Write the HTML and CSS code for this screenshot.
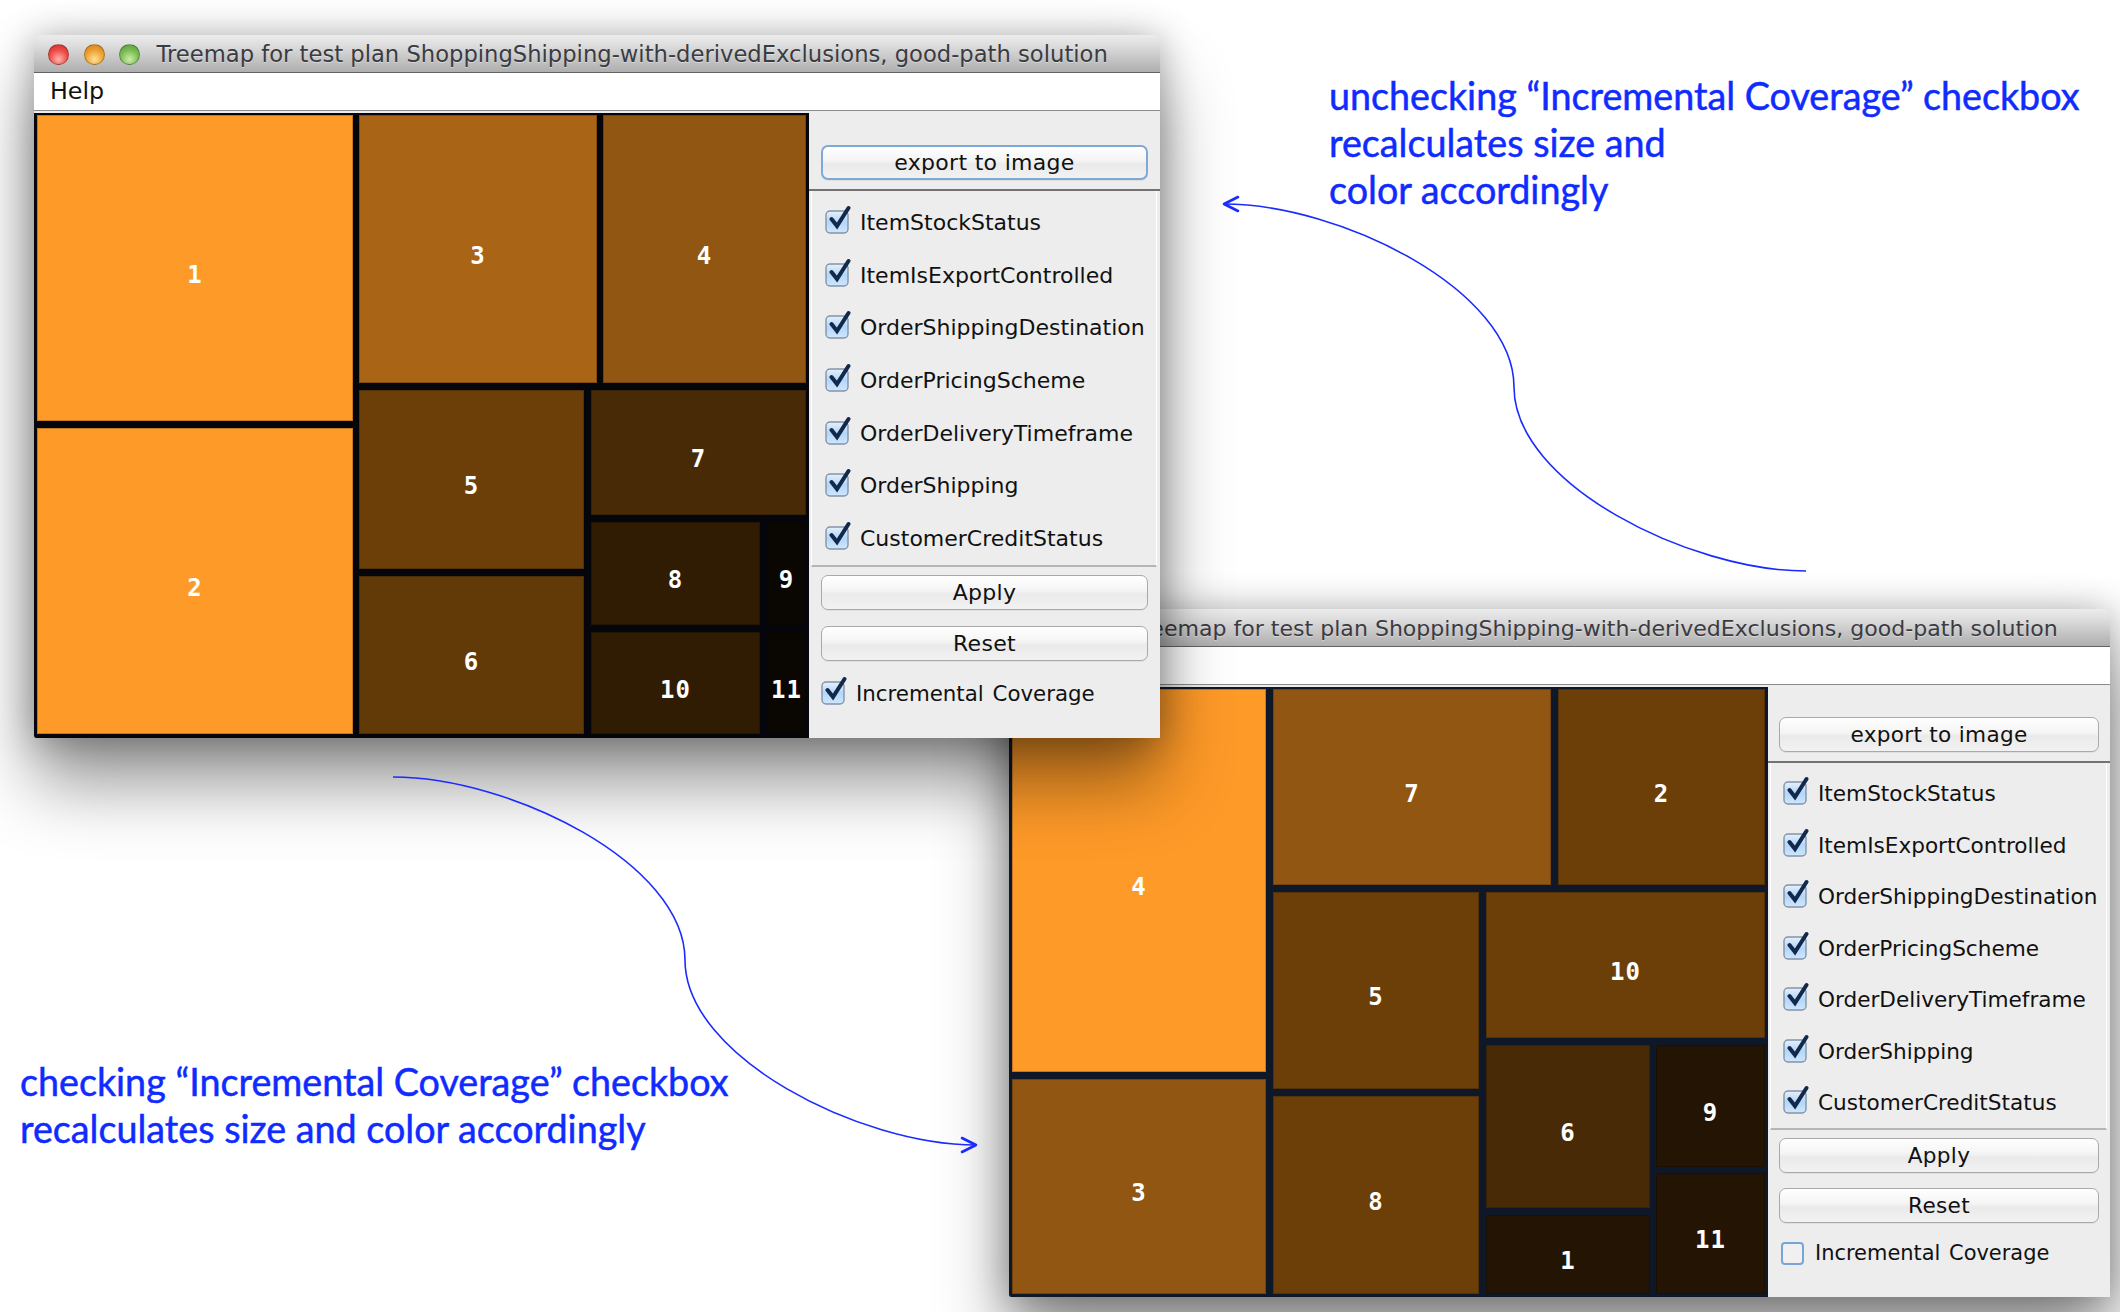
FILE: index.html
```html
<!DOCTYPE html>
<html lang="en">
<head>
<meta charset="UTF-8" />
<title>Treemap incremental coverage</title>
<link rel="stylesheet" href="styles.css">
</head>
<body>

<svg width="0" height="0" class="defs">
  <defs>
    <linearGradient id="boxFill" x1="0" y1="0" x2="0" y2="1">
      <stop offset="0" stop-color="#e6f0fb"/>
      <stop offset="0.5" stop-color="#b4d6f8"/>
      <stop offset="1" stop-color="#cfe6fd"/>
    </linearGradient>
    <symbol id="checked" viewBox="0 0 26 29">
      <rect x="1" y="6" width="22" height="22" rx="4" fill="url(#boxFill)" stroke="#8494a8" stroke-width="1.4"/>
      <path d="M6.5 14 L12 21 L23.5 3" fill="none" stroke="#10294c" stroke-width="4" stroke-linecap="round" stroke-linejoin="miter"/>
    </symbol>
  </defs>
</svg>

<div class="stage">

  <!-- back window: incremental coverage off -->
  <section class="window win-b">
    <div class="titlebar">
      <span class="light red"></span><span class="light amber"></span><span class="light green"></span>
      <span class="title">Treemap for test plan ShoppingShipping-with-derivedExclusions, good-path solution</span>
    </div>
    <div class="menubar"></div>
    <div class="content">
      <div class="treemap">
        <div class="tm-row grow">
          <div class="tm-col" style="flex-basis:254px">
            <div class="cell c-hot" style="flex-basis:383px">4</div>
            <div class="cell c-b1 grow">3</div>
          </div>
          <div class="tm-col grow">
            <div class="tm-row" style="flex-basis:196px">
              <div class="cell c-b1" style="flex-basis:278px">7</div>
              <div class="cell c-b2 grow">2</div>
            </div>
            <div class="tm-row grow">
              <div class="tm-col" style="flex-basis:206px">
                <div class="cell c-b2" style="flex-basis:197px">5</div>
                <div class="cell c-b2 grow">8</div>
              </div>
              <div class="tm-col grow">
                <div class="cell c-b2" style="flex-basis:146px">10</div>
                <div class="tm-row tight grow">
                  <div class="tm-col" style="flex-basis:164px">
                    <div class="cell c-b3" style="flex-basis:163px">6</div>
                    <div class="cell c-b4 grow">1</div>
                  </div>
                  <div class="tm-col tight grow">
                    <div class="cell c-b4" style="flex-basis:122px">9</div>
                    <div class="cell c-b4 grow">11</div>
                  </div>
                </div>
              </div>
            </div>
          </div>
        </div>
      </div>
      <aside class="panel">
        <div class="export-area"><button class="btn">export to image</button></div>
        <ul class="factor-list">
          <li class="check"><svg class="box"><use href="#checked"/></svg>ItemStockStatus</li>
          <li class="check"><svg class="box"><use href="#checked"/></svg>ItemIsExportControlled</li>
          <li class="check"><svg class="box"><use href="#checked"/></svg>OrderShippingDestination</li>
          <li class="check"><svg class="box"><use href="#checked"/></svg>OrderPricingScheme</li>
          <li class="check"><svg class="box"><use href="#checked"/></svg>OrderDeliveryTimeframe</li>
          <li class="check"><svg class="box"><use href="#checked"/></svg>OrderShipping</li>
          <li class="check"><svg class="box"><use href="#checked"/></svg>CustomerCreditStatus</li>
        </ul>
        <div class="actions">
          <button class="btn">Apply</button>
          <button class="btn">Reset</button>
          <div class="check incremental"><span class="box-off"></span>Incremental Coverage</div>
        </div>
      </aside>
    </div>
  </section>

  <!-- front window: incremental coverage on -->
  <section class="window win-a">
    <div class="titlebar">
      <span class="light red"></span><span class="light amber"></span><span class="light green"></span>
      <span class="title">Treemap for test plan ShoppingShipping-with-derivedExclusions, good-path solution</span>
    </div>
    <div class="menubar"><span class="menu-item">Help</span></div>
    <div class="content">
      <div class="treemap">
        <div class="tm-row grow">
          <div class="tm-col" style="flex-basis:316px">
            <div class="cell c-hot" style="flex-basis:306px">1</div>
            <div class="cell c-hot grow">2</div>
          </div>
          <div class="tm-col" style="flex-basis:447px">
            <div class="tm-row tight" style="flex-basis:268px">
              <div class="cell c-a1" style="flex-basis:238px">3</div>
              <div class="cell c-b1 grow">4</div>
            </div>
            <div class="tm-row grow">
              <div class="tm-col" style="flex-basis:225px">
                <div class="cell c-b2" style="flex-basis:179px">5</div>
                <div class="cell c-a2 grow">6</div>
              </div>
              <div class="tm-col grow">
                <div class="cell c-b3" style="flex-basis:125px">7</div>
                <div class="tm-row" style="flex-basis:103px">
                  <div class="cell c-a3" style="flex-basis:169px">8</div>
                  <div class="cell c-a4 grow">9</div>
                </div>
                <div class="tm-row grow">
                  <div class="cell c-a3" style="flex-basis:169px">10</div>
                  <div class="cell c-a4 grow">11</div>
                </div>
              </div>
            </div>
          </div>
        </div>
      </div>
      <aside class="panel">
        <div class="export-area"><button class="btn focused">export to image</button></div>
        <ul class="factor-list">
          <li class="check"><svg class="box"><use href="#checked"/></svg>ItemStockStatus</li>
          <li class="check"><svg class="box"><use href="#checked"/></svg>ItemIsExportControlled</li>
          <li class="check"><svg class="box"><use href="#checked"/></svg>OrderShippingDestination</li>
          <li class="check"><svg class="box"><use href="#checked"/></svg>OrderPricingScheme</li>
          <li class="check"><svg class="box"><use href="#checked"/></svg>OrderDeliveryTimeframe</li>
          <li class="check"><svg class="box"><use href="#checked"/></svg>OrderShipping</li>
          <li class="check"><svg class="box"><use href="#checked"/></svg>CustomerCreditStatus</li>
        </ul>
        <div class="actions">
          <button class="btn">Apply</button>
          <button class="btn">Reset</button>
          <div class="check incremental"><svg class="box"><use href="#checked"/></svg>Incremental Coverage</div>
        </div>
      </aside>
    </div>
  </section>

  <!-- callout arrows -->
  <svg class="arrows" width="2120" height="1312" viewBox="0 0 2120 1312">
    <path class="curve" d="M1806 571 C1690 571 1514 484 1514 387 C1514 290 1340 204 1224 204"/>
    <path class="head" d="M1238 197 L1224 204 L1238 211"/>
    <path class="curve" d="M393 777 C510 777 685 863 685 960 C685 1057 860 1145 976 1145"/>
    <path class="head" d="M962 1138 L976 1145 L962 1152"/>
  </svg>

  <p class="note note-top">unchecking “Incremental Coverage” checkbox<br>recalculates size and<br>color accordingly</p>
  <p class="note note-bottom">checking “Incremental Coverage” checkbox<br>recalculates size and color accordingly</p>

</div>

</body>
</html>
```

FILE: styles.css
```css
/* Base */
* {
  box-sizing: border-box;
}
html, body {
  margin: 0;
  background: white;
}
.defs {
  position: absolute;
}
.stage {
  position: relative;
  width: 2120px;
  height: 1312px;
  overflow: hidden;
  font-family: "DejaVu Sans", sans-serif;
}

/* Windows sit freely on the desktop */
.window {
  position: absolute;
  display: flex;
  flex-direction: column;
  background: #ededed;
  border-radius: 8px 8px 5px 0;
  box-shadow: 0 2px 36px rgba(0,0,0,0.3), 0 45px 70px rgba(0,0,0,0.42);
}
.win-a {
  left: 34px;
  top: 35px;
  width: 1126px;
  height: 703px;
  font-size: 22px;
  z-index: 2;
}
.win-b {
  left: 1009px;
  top: 609px;
  width: 1101px;
  height: 688px;
  font-size: 21.6px;
  z-index: 1;
}

/* Title bar */
.titlebar {
  flex: 0 0 38px;
  display: flex;
  align-items: center;
  padding: 1px 0 0 14px;
  background: linear-gradient(#ececec, #dcdcdc 30%, #aeaeae);
  border-bottom: 1px solid #636363;
  border-radius: 8px 8px 0 0;
}
.win-b .titlebar {
  padding-top: 2px;
}
.light {
  width: 21px;
  height: 21px;
  border-radius: 50%;
  margin-right: 14.5px;
  border: 1px solid rgba(0,0,0,0.25);
}
.light.red {
  background: radial-gradient(circle at 50% 75%, #ffb3ad, #ee4a44 55%, #c9302c);
}
.light.amber {
  background: radial-gradient(circle at 50% 75%, #ffe09a, #ec9f2e 55%, #c97f1c);
}
.light.green {
  background: radial-gradient(circle at 50% 75%, #cdeca8, #78bc52 55%, #55983a);
}
.title {
  margin-left: 2px;
  font-size: 1.03em;
  color: #3b3b42;
  text-shadow: 0 1px 0 rgba(255,255,255,0.4);
  white-space: nowrap;
}
.win-b .title {
  font-size: 1.022em;
}

/* Menu bar */
.menubar {
  flex: 0 0 38px;
  min-height: 0;
  overflow: hidden;
  background: white;
  border-bottom: 1px solid #8a8a8a;
  padding-left: 16px;
  line-height: 37px;
  color: #111;
}
.menu-item {
  font-size: 1.08em;
}

.content {
  flex: 1;
  display: flex;
  min-height: 0;
  padding-top: 2px;
}

/* Treemap */
.win-a .treemap {
  flex: 0 0 775px;
  padding: 2px 3px 4px;
  background: #04060b;
}
.win-b .treemap {
  flex: 0 0 759px;
  padding: 2px 3px 3px;
  background: #0e1828;
}
.treemap {
  display: flex;
  border-bottom-left-radius: 2px;
}
.tm-row {
  display: flex;
  gap: 7px;
  flex: 0 0 auto;
  min-width: 0;
}
.tm-col {
  display: flex;
  flex-direction: column;
  gap: 7px;
  flex: 0 0 auto;
  min-height: 0;
}
.tight {
  gap: 6px;
}
.win-a .treemap > .tm-row {
  gap: 6px;
}
.grow {
  flex-grow: 1;
  flex-basis: 0;
}
.cell {
  flex: 0 0 auto;
  display: flex;
  align-items: center;
  justify-content: center;
  padding-top: 13px;
  font-family: "DejaVu Sans Mono", monospace;
  font-weight: 700;
  font-size: 24px;
  letter-spacing: 1px;
  color: white;
  border: 1px solid rgba(0,0,0,0.22);
}
.cell.grow {
  flex: 1 1 0;
}
.c-hot { background: #fe9a28; }
.c-a1 { background: #a96415; }
.c-b1 { background: #915611; }
.c-b2 { background: #6c3f09; }
.c-a2 { background: #623a08; }
.c-b3 { background: #482b06; }
.c-a3 { background: #2f1c03; }
.c-b4 { background: #231404; }
.c-a4 { background: #0a0602; }

/* Control panel */
.panel {
  flex: 1;
  display: flex;
  flex-direction: column;
  min-width: 0;
  background: #ededed;
}
.win-a .export-area {
  flex: 0 0 78px;
  padding: 32px 12px 0 12px;
}
.win-b .export-area {
  flex: 0 0 76px;
  padding: 30px 11px 0 11px;
}
.export-area {
  border-bottom: 2px solid #727272;
}
.btn {
  display: block;
  width: 100%;
  height: 35px;
  padding: 0;
  font: inherit;
  letter-spacing: 0.3px;
  color: #111;
  background: linear-gradient(#fff, #f4f4f4 45%, #eaeaea 55%, #f2f2f2);
  border: 1.5px solid #a9a9a9;
  border-radius: 7px;
  box-shadow: 0 1px 0 rgba(0,0,0,0.06);
}
.btn.focused {
  border: 2px solid #7ea8d6;
}
.factor-list {
  list-style: none;
  margin: 0 3px 0 2px;
  padding: 5px 0 0 13px;
  border-left: 1px solid white;
  border-right: 1px solid white;
  border-bottom: 2px solid #b5b5b5;
}
.win-a .factor-list {
  height: 376px;
}
.win-b .factor-list {
  height: 367px;
  padding-left: 12px;
}
.check {
  display: flex;
  align-items: center;
  gap: 9px;
  color: #111;
  white-space: nowrap;
}
.win-a .factor-list .check { height: 52.7px; }
.win-b .factor-list .check { height: 51.5px; }
.box {
  flex: 0 0 26px;
  width: 26px;
  height: 29px;
  margin-top: -6px;
}
.box-off {
  flex: 0 0 23px;
  height: 23px;
  margin-right: 3px;
  border: 2px solid #77a5d8;
  border-radius: 4px;
  background: #f0f0f0;
}
.actions {
  display: flex;
  flex-direction: column;
  padding-top: 8px;
}
.win-a .actions {
  padding: 8px 12px 0 12px;
  gap: 16px;
}
.win-b .actions {
  padding: 8px 11px 0 11px;
  gap: 15px;
}
.incremental {
  margin-top: -1px;
  height: 34px;
  font-size: 0.97em;
  word-spacing: 2px;
}
.win-a .incremental {
  gap: 9px;
}
.win-b .incremental {
  margin: -2px 0 0 2px;
  gap: 8px;
}

/* Callouts */
.arrows {
  position: absolute;
  left: 0;
  top: 0;
  z-index: 3;
}
.curve {
  fill: none;
  stroke: #1a2bff;
  stroke-width: 1.6;
}
.head {
  fill: none;
  stroke: #1a2bff;
  stroke-width: 2.6;
  stroke-linecap: round;
  stroke-linejoin: round;
}
.note {
  position: absolute;
  margin: 0;
  z-index: 3;
  font-family: Lato, sans-serif;
  font-size: 37.7px;
  line-height: 47px;
  color: #0f2bff;
  -webkit-text-stroke: 0.5px #0f2bff;
  white-space: nowrap;
}
.note-top {
  left: 1329px;
  top: 72px;
}
.note-bottom {
  left: 20px;
  top: 1058px;
}
```
